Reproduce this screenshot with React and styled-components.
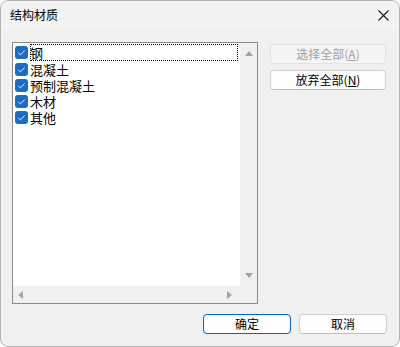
import React from 'react';
import styled, { createGlobalStyle } from 'styled-components';

const materials = ['钢', '混凝土', '预制混凝土', '木材', '其他'];

const GlobalStyle = createGlobalStyle`
  html, body {
    margin: 0;
    padding: 0;
    background: #ffffff;
  }
  * {
    box-sizing: border-box;
  }
`

function CheckMark() {
    return (
      <svg width="13" height="13" viewBox="0 0 13 13">
        <path d="M3.4 7 L5.4 8.9 L9.6 4.5" fill="none" stroke="#e8f0fa" strokeWidth="1" />
      </svg>
    );
}

function App() {
    return (
      <>
        <GlobalStyle />
        <Window>
          <TitleBar>
            <Title>结构材质</Title>
            <CloseButton>
              <svg width="11" height="11" viewBox="0 0 11 11">
                <path d="M0.5 0.5 L10.5 10.5 M10.5 0.5 L0.5 10.5" stroke="#1a1a1a" strokeWidth="1.1" />
              </svg>
            </CloseButton>
          </TitleBar>

          <Body>
            <TopRow>
              <ListBox>
                <ListArea>
                  {materials.map((name, i) => (
                    <Item key={name}>
                      <Box><CheckMark /></Box>
                      <Label focused={i === 0}>{name}</Label>
                    </Item>
                  ))}
                </ListArea>
                <VScroll>
                  <Arrow dir="up" />
                  <Arrow dir="down" />
                </VScroll>
                <HScroll>
                  <Arrow dir="left" />
                  <Arrow dir="right" />
                </HScroll>
                <Corner />
              </ListBox>

              <SideButtons>
                <Button disabled>选择全部(<u>A</u>)</Button>
                <Button>放弃全部(<u>N</u>)</Button>
              </SideButtons>
            </TopRow>

            <Footer>
              <Button primary wide>确定</Button>
              <Button wide>取消</Button>
            </Footer>
          </Body>
        </Window>
      </>
    );
};

const Window = styled.div`
  width: 400px;
  height: 347px;
  display: flex;
  flex-direction: column;
  border: 1px solid #b4b4b4;
  border-radius: 8px;
  overflow: hidden;
  background: #f0f0f0;
  font-family: "Noto Sans CJK SC", "Liberation Sans", sans-serif;
  color: #000000;
`
const TitleBar = styled.div`
  height: 29px;
  display: flex;
  align-items: center;
  justify-content: space-between;
  padding: 0 10px 0 9px;
  background: #f3f3f3;
`
const Title = styled.span`
  font-size: 12px;
  line-height: 1;
  margin-top: -1px;
`
const CloseButton = styled.div`
  width: 11px;
  height: 11px;
  display: flex;
  margin-top: -1px;
`
const Body = styled.div`
  flex: 1;
  display: flex;
  flex-direction: column;
  padding: 12px 12px 0 11px;
`
const TopRow = styled.div`
  display: flex;
  gap: 12px;
`
const ListBox = styled.div`
  width: 246px;
  height: 262px;
  border: 1px solid #8a8a8a;
  display: grid;
  grid-template-columns: 1fr 17px;
  grid-template-rows: 1fr 17px;
  background: #f0f0f0;
`
const ListArea = styled.div`
  background: #ffffff;
  padding: 0 0 0 2px;
  display: flex;
  flex-direction: column;
`
const Item = styled.div`
  height: 16px;
  display: flex;
  align-items: center;
  gap: 2px;
  &:first-child {
    height: 18px;
    padding-top: 1px;
  }
`
const Box = styled.div`
  width: 13px;
  height: 13px;
  border-radius: 3px;
  background: #1d6cc4;
  display: flex;
  flex-shrink: 0;
`
const Label = styled.span`
  flex: 1;
  height: 100%;
  display: flex;
  align-items: center;
  font-size: 13px;
  line-height: 1;
  margin-right: ${p => (p.focused ? '2px' : '0')};
  outline: ${p => (p.focused ? '1px dotted #000000' : 'none')};
  outline-offset: -1px;
`
const VScroll = styled.div`
  display: flex;
  flex-direction: column;
  justify-content: space-between;
  align-items: center;
  padding: 8px 0 8px;
`
const HScroll = styled.div`
  display: flex;
  justify-content: space-between;
  align-items: center;
  padding: 0 8px 0 5px;
`
const Corner = styled.div`
  background: #f0f0f0;
`
const Arrow = styled.div`
  width: 0;
  height: 0;
  border-style: solid;
  border-color: transparent;
  ${p => p.dir === 'up' && 'border-width: 0 4px 5px 4px; border-bottom-color: #a3a3a3;'}
  ${p => p.dir === 'down' && 'border-width: 5px 4px 0 4px; border-top-color: #a3a3a3;'}
  ${p => p.dir === 'left' && 'border-width: 4px 5px 4px 0; border-right-color: #a3a3a3;'}
  ${p => p.dir === 'right' && 'border-width: 4px 0 4px 5px; border-left-color: #a3a3a3;'}
`
const SideButtons = styled.div`
  display: flex;
  flex-direction: column;
  gap: 6px;
  padding-top: 2px;
`
const Button = styled.button`
  width: ${p => (p.wide ? '88px' : '116px')};
  height: 20px;
  padding: 0;
  border-radius: 4px;
  font-family: "Noto Sans CJK SC", "Liberation Sans", sans-serif;
  font-size: 12px;
  line-height: 1;
  color: #000000;
  background: #fdfdfd;
  border: 1px solid ${p => (p.primary ? '#0067c0' : '#d0d0d0')};
  border-bottom-color: ${p => (p.primary ? '#0067c0' : '#bcbcbc')};

  &:disabled {
    color: #a0a0a0;
    background: #f5f5f5;
    border-color: #e2e2e2;
  }

  u {
    text-underline-offset: 1px;
  }
`
const Footer = styled.div`
  display: flex;
  justify-content: flex-end;
  gap: 8px;
  margin-top: 10px;
`

export default App;
